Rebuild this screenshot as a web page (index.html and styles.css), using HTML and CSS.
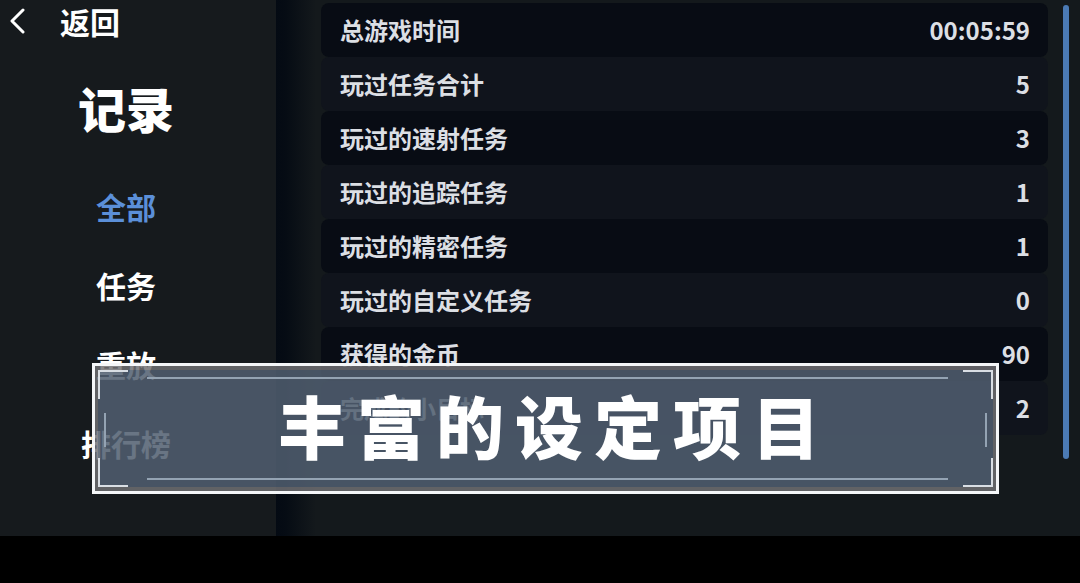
FILE: index.html
```html
<!DOCTYPE html>
<html lang="zh-CN">
<head>
    <meta charset="UTF-8">
    <meta name="viewport" content="width=device-width, initial-scale=1.0">
    <title>记录</title>
    <link rel="stylesheet" href="styles.css">
</head>
<body>
    <div class="app">
        <nav class="sidebar">
            <button class="back" type="button">
                <svg class="back-icon" viewBox="0 0 16 26" width="16" height="26">
                    <path d="M13 2 L2 13 L13 24" fill="none" stroke="#fff" stroke-width="3" stroke-linecap="round" stroke-linejoin="round"/>
                </svg>
                <span>返回</span>
            </button>
            <h1>记录</h1>
            <ul class="menu">
                <li><a href="#all" class="active">全部</a></li>
                <li><a href="#tasks">任务</a></li>
                <li><a href="#replay">重放</a></li>
                <li><a href="#rank">排行榜</a></li>
            </ul>
        </nav>

        <main class="content">
            <table class="records">
                <tbody>
                    <tr><th scope="row">总游戏时间</th><td>00:05:59</td></tr>
                    <tr><th scope="row">玩过任务合计</th><td>5</td></tr>
                    <tr><th scope="row">玩过的速射任务</th><td>3</td></tr>
                    <tr><th scope="row">玩过的追踪任务</th><td>1</td></tr>
                    <tr><th scope="row">玩过的精密任务</th><td>1</td></tr>
                    <tr><th scope="row">玩过的自定义任务</th><td>0</td></tr>
                    <tr><th scope="row">获得的金币</th><td>90</td></tr>
                    <tr><th scope="row">完成的小目标</th><td>2</td></tr>
                </tbody>
            </table>
            <div class="scrollbar"><div class="thumb"></div></div>
        </main>

        <!-- caption over the page -->
        <div class="banner">
            <div class="banner-inner">
                <span class="corner top left"></span>
                <span class="corner top right"></span>
                <span class="corner bottom left"></span>
                <span class="corner bottom right"></span>
                <span class="line line-top"></span>
                <span class="line line-bottom"></span>
                <span class="line line-left"></span>
                <span class="line line-right"></span>
                <h2>丰富的设定项目</h2>
            </div>
        </div>
    </div>
</body>
</html>
```

FILE: styles.css
```css
* {
    box-sizing: border-box;
}

body {
    margin: 0;
    min-height: 100vh;
    display: flex;
    flex-direction: column;
    padding-bottom: 47px;
    background: #000;
    color: #fff;
    font-family: "Noto Sans CJK SC", sans-serif;
}

.app {
    position: relative;
    flex: 1;
    display: flex;
    background: #14191c;
}

/* Sidebar */
.sidebar {
    flex: 0 0 276px;
    background: #161a1d;
}

.back {
    display: flex;
    align-items: center;
    gap: 34px;
    height: 42px;
    padding: 0 10px;
    border: 0;
    background: none;
    color: #fff;
    font-family: inherit;
    font-size: 30px;
    font-weight: 700;
    line-height: 42px;
}

.sidebar h1 {
    margin: 30px 24px 0 0;
    font-size: 48px;
    font-weight: 900;
    line-height: 70px;
    text-align: center;
}

.menu {
    list-style: none;
    margin: 25px 24px 0 0;
    padding: 0;
    text-align: center;
}

.menu a {
    display: block;
    color: #fff;
    font-size: 30px;
    font-weight: 700;
    line-height: 79px;
    text-decoration: none;
}

.menu a.active {
    color: #5b8fd8;
}

/* Records */
.content {
    flex: 1;
    display: flex;
    align-items: flex-start;
    padding: 3px 11px 0 45px;
    background: linear-gradient(to right, #040a13 0, #060c14 10px, #14191c 40px);
}

.records {
    flex: 1;
    border-collapse: separate;
    border-spacing: 0;
    font-size: 24px;
    line-height: 54px;
    color: #dcdfe4;
}

.records th,
.records td {
    height: 54px;
    padding: 0 18px 0 19px;
    font-weight: 700;
    background: #10141c;
}

.records th {
    text-align: left;
    border-radius: 8px 0 0 8px;
}

.records td {
    text-align: right;
    border-radius: 0 8px 8px 0;
}

.records tr:nth-child(odd) th,
.records tr:nth-child(odd) td {
    background: #080c14;
}

.scrollbar {
    width: 6px;
    margin: 2px 0 0 15px;
}

.thumb {
    height: 454px;
    border-radius: 3px;
    background: #4b7ab4;
}

/* Banner */
.banner {
    position: absolute;
    top: 363px;
    left: 92px;
    right: 81px;
    border: 3px solid #f4f6f8;
}

.banner-inner {
    position: relative;
    height: 125px;
    display: flex;
    align-items: center;
    justify-content: center;
    border: solid rgba(112, 112, 116, 0.84);
    border-width: 4px 3px;
    background: rgba(80, 94, 112, 0.86) padding-box;
}

.banner h2 {
    margin: 0;
    padding: 0 0 8px 18px;
    font-size: 68px;
    font-weight: 900;
    line-height: 96px;
    letter-spacing: 11px;
}

.corner {
    position: absolute;
    width: 30px;
    height: 29px;
    border: 0 solid #d9dee4;
}

.top {
    top: 0;
    border-top-width: 2px;
}

.bottom {
    bottom: 0;
    border-bottom-width: 2px;
}

.left {
    left: 0;
    border-left-width: 2px;
}

.right {
    right: 0;
    border-right-width: 2px;
}

.line {
    position: absolute;
    background: #94a3b3;
}

.line-top,
.line-bottom {
    left: 49px;
    right: 45px;
    height: 2px;
}

.line-top {
    top: 7px;
}

.line-bottom {
    bottom: 7px;
}

.line-left,
.line-right {
    top: 43px;
    width: 2px;
    height: 34px;
}

.line-left {
    left: 6px;
}

.line-right {
    right: 6px;
}
```
